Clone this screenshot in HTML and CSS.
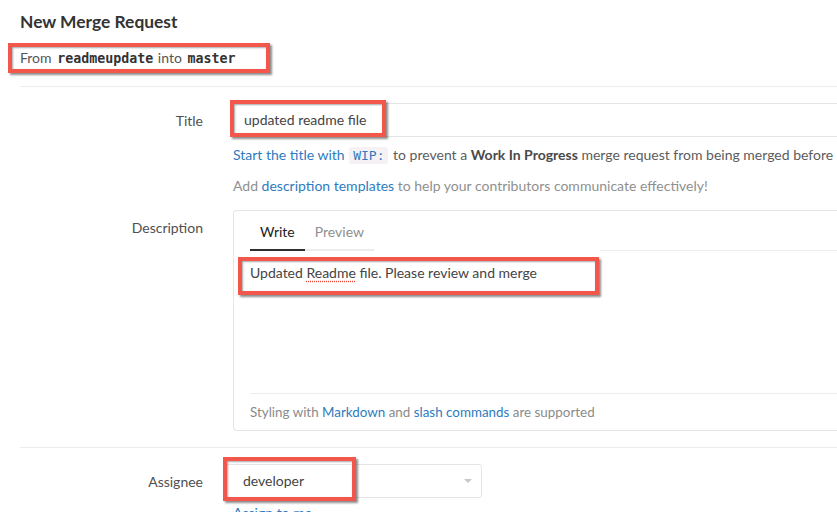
FILE: index.html
```html
<!DOCTYPE html>
<html>
<head>
<meta charset="utf-8">
<link rel="stylesheet" href="styles.css">
</head>
<body>
<div class="page">
  <h3 class="page-title">New Merge Request</h3>
  <div class="branch-info">
    <span class="annot annot-branch"></span>
    From <code class="ref">readmeupdate</code> into <code class="ref">master</code>
  </div>
  <hr class="sep sep-top">
  <div class="form">
    <div class="row row-title">
      <div class="label">Title</div>
      <div class="col">
        <div class="input">
          <span class="annot annot-title"></span>
          updated readme file
        </div>
        <p class="help help-first"><a class="link">Start the title with <code class="wip">WIP:</code></a> to prevent a <strong>Work In Progress</strong> merge request from being merged before it's ready.</p>
        <p class="help help-muted">Add <a class="link">description templates</a> to help your contributors communicate effectively!</p>
      </div>
    </div>
    <div class="row row-desc">
      <div class="label">Description</div>
      <div class="col">
        <div class="md-box">
          <div class="md-header">
            <ul class="tabs">
              <li class="tab active">Write</li>
              <li class="tab">Preview</li>
            </ul>
            <div class="md-header-rest"></div>
          </div>
          <div class="md-area">
            <span class="annot annot-desc"></span>
            Updated <span class="misspelled">Readme</span> file. Please review and merge
          </div>
          <div class="md-footer">Styling with <a class="link">Markdown</a> and <a class="link">slash commands</a> are supported</div>
        </div>
      </div>
    </div>
    <hr class="sep sep-mid">
    <div class="row row-assignee">
      <div class="label">Assignee</div>
      <div class="col">
        <div class="select">
          <span class="annot annot-assignee"></span>
          <span class="select-text">developer</span>
          <span class="caret"></span>
        </div>
        <a class="link assign-me">Assign to me</a>
      </div>
    </div>
  </div>
</div>
</body>
</html>
```
FILE: styles.css
```css
html, body {
  margin: 0;
  padding: 0;
  background: #fff;
  overflow: hidden;
}
body {
  font-family: "Lato", "Liberation Sans", sans-serif;
  font-size: 14px;
  color: #555;
  width: 837px;
  height: 512px;
}
.page {
  padding-left: 20px;
  width: 1000px;
}
.page-title {
  margin: 10px 0 0;
  font-size: 17.4px;
  line-height: 24px;
  font-weight: 700;
  color: #333;
}
.branch-info {
  position: relative;
  margin-top: 14px;
  line-height: 20px;
  color: #555;
}
.ref {
  font-family: "DejaVu Sans Mono", monospace;
  font-size: 13.3px;
  font-weight: 700;
  color: #333;
  margin: 0 1px 0 2px;
}
.sep {
  border: 0;
  border-top: 1px solid #ececec;
  margin: 0;
}
.sep-top { margin-top: 17px; }
.sep-mid { margin-top: 16px; }

.row {
  display: grid;
  grid-template-columns: 183px 1fr;
  column-gap: 30px;
}
.row-title { margin-top: 16px; }
.row-desc { margin-top: 14px; }
.row-assignee { margin-top: 16px; }
.label {
  text-align: right;
  padding-top: 8px;
  line-height: 20px;
  color: #4f4f4f;
}
.col { display: flex; flex-direction: column; align-items: flex-start; }

.input {
  position: relative;
  box-sizing: border-box;
  width: 100%;
  height: 34px;
  border: 1px solid #e5e5e5;
  border-right: 0;
  padding: 0 10px;
  line-height: 32px;
  color: #444;
}
.help {
  margin: 8px 0 0;
  line-height: 20px;
  color: #5c5c5c;
  white-space: nowrap;
}
.help + .help { margin-top: 10px; }
.help-muted { color: #8f8f8f; }
.help strong { color: #4a4a4a; font-weight: 700; }
.link { color: #2e7bbf; text-decoration: none; }
.wip {
  font-family: "DejaVu Sans Mono", monospace;
  font-size: 13px;
  background: #f6f1f4;
  border-radius: 3px;
  padding: 1px 4px;
  margin: 0 1px;
  color: #2e7bbf;
}

.md-box {
  box-sizing: border-box;
  width: 100%;
  height: 221px;
  border: 1px solid #e5e5e5;
  border-right: 0;
  border-radius: 4px 0 0 4px;
  display: flex;
  flex-direction: column;
}
.md-header {
  display: flex;
  padding-left: 16px;
  align-items: flex-end;
}
.tabs {
  display: flex;
  list-style: none;
  margin: 0;
  padding: 0;
  border-bottom: 2px solid #ececec;
}
.tab {
  padding: 11px 10px 7px;
  line-height: 20px;
  color: #8f8f8f;
  margin-bottom: -2px;
  border-bottom: 2px solid transparent;
}
.tab.active {
  color: #222;
  border-bottom-color: #2e2e2e;
}
.md-header-rest {
  flex: 1;
  margin-left: 226px;
  border-bottom: 1px solid #ececec;
}
.md-area {
  position: relative;
  flex: 1;
  padding: 12px 16px 0;
  line-height: 20px;
  color: #444;
}
.misspelled {
  text-decoration: underline dotted #e8473b;
  text-underline-offset: 3px;
}
.md-footer {
  margin-left: 16px;
  border-top: 1px solid #ececec;
  padding: 8px 0 8px;
  line-height: 20px;
  font-size: 13.4px;
  color: #8a8a8a;
}

.select {
  position: relative;
  box-sizing: border-box;
  margin-left: -8px;
  width: 257px;
  height: 34px;
  border: 1px solid #e5e5e5;
  border-radius: 3px;
  padding: 0 17px;
  line-height: 32px;
  color: #444;
  display: flex;
  align-items: center;
  justify-content: space-between;
}
.caret {
  width: 0;
  height: 0;
  border-left: 4px solid transparent;
  border-right: 4px solid transparent;
  border-top: 4px solid #c8c8c8;
  margin-right: -8px;
}
.assign-me {
  margin-top: 5px;
  line-height: 20px;
}

.annot {
  position: absolute;
  box-sizing: border-box;
  border: 4px solid #f3564a;
  box-shadow: 2px 2px 2px rgba(0,0,0,0.45), inset 1px 1px 2px rgba(0,0,0,0.35);
  pointer-events: none;
}
.annot-branch { left: -12px; top: -5px; width: 262px; height: 30px; }
.annot-title { left: -4px; top: -4px; width: 156px; height: 37px; }
.annot-desc { left: 4px; top: 6px; width: 361px; height: 38px; }
.annot-assignee { left: -3px; top: -8px; width: 133px; height: 44px; }
```
